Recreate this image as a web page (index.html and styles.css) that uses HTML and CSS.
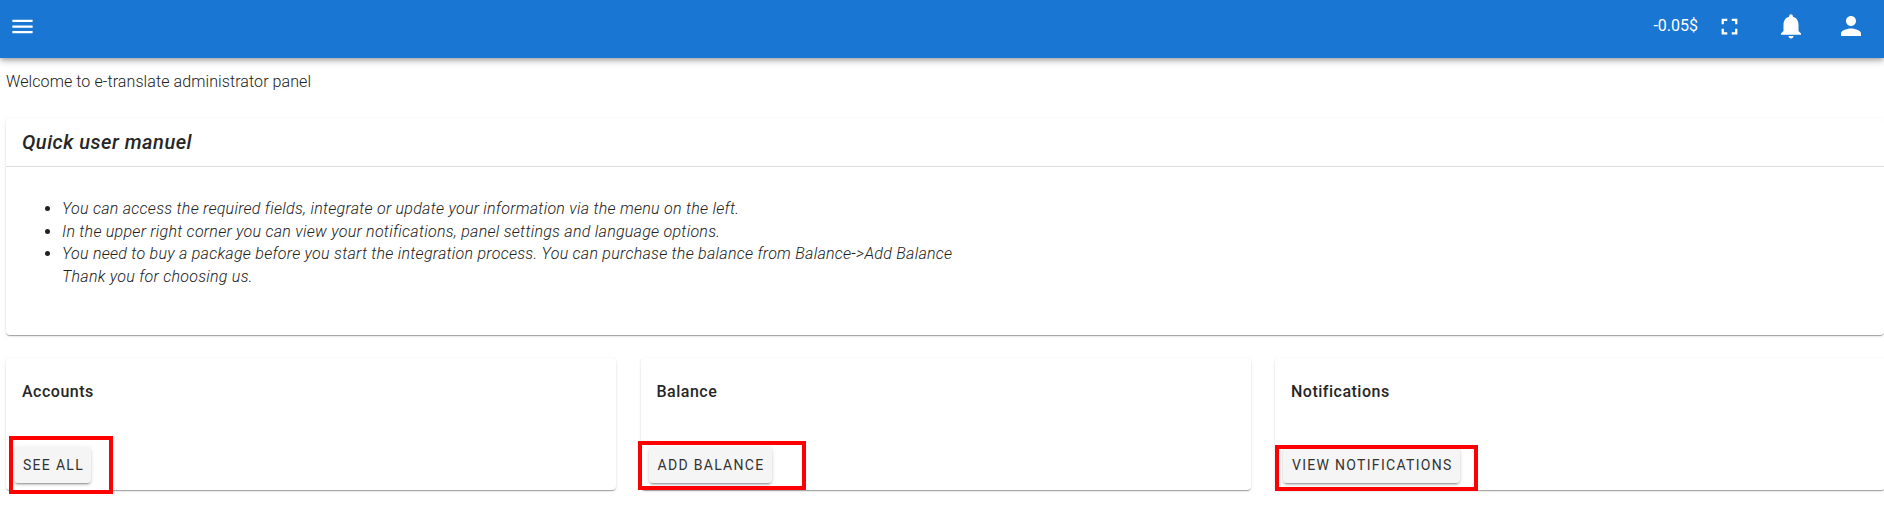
FILE: index.html
```html
<!DOCTYPE html>
<html lang="en">
<head>
    <meta charset="UTF-8">
    <title>e-translate</title>
    <link rel="stylesheet" href="styles.css">
</head>
<body>
    <header class="topbar">
        <svg class="ico ico-menu" viewBox="0 0 24 24"><path d="M3 18h18v-2H3v2zm0-5h18v-2H3v2zm0-7v2h18V6H3z"/></svg>
        <span class="balance">-0.05$</span>
        <svg class="ico ico-full" viewBox="0 0 24 24"><path d="M7 14H5v5h5v-2H7v-3zm-2-4h2V7h3V5H5v5zm12 7h-3v2h5v-5h-2v3zM14 5v2h3v3h2V5h-5z"/></svg>
        <svg class="ico ico-bell" viewBox="0 0 24 24"><path d="M12 22c1.1 0 2-.9 2-2h-4c0 1.1.89 2 2 2zm6-6v-5c0-3.07-1.64-5.64-4.5-6.32V4c0-.83-.67-1.5-1.5-1.5s-1.5.67-1.5 1.5v.68C7.63 5.36 6 7.92 6 11v5l-2 2v1h16v-1l-2-2z"/></svg>
        <svg class="ico ico-user" viewBox="0 0 24 24"><path d="M12 12c2.21 0 4-1.79 4-4s-1.79-4-4-4-4 1.79-4 4 1.79 4 4 4zm0 2c-2.67 0-8 1.34-8 4v2h16v-2c0-2.66-5.33-4-8-4z"/></svg>
    </header>

    <main class="page">
        <p class="welcome">Welcome to e-translate administrator panel</p>

        <section class="card manual">
            <h2 class="manual-title">Quick user manuel</h2>
            <div class="manual-body">
                <ul class="manual-list">
                    <li>You can access the required fields, integrate or update your information via the menu on the left.</li>
                    <li>In the upper right corner you can view your notifications, panel settings and language options.</li>
                    <li>You need to buy a package before you start the integration process. You can purchase the balance from Balance-&gt;Add Balance<br>Thank you for choosing us.</li>
                </ul>
            </div>
        </section>

        <div class="cards">
            <section class="card tile">
                <h3 class="tile-title">Accounts</h3>
                <div class="tile-actions">
                    <button class="btn">SEE ALL</button>
                    <span class="mark mark-accounts"></span>
                </div>
            </section>
            <section class="card tile">
                <h3 class="tile-title">Balance</h3>
                <div class="tile-actions">
                    <button class="btn">ADD BALANCE</button>
                    <span class="mark mark-balance"></span>
                </div>
            </section>
            <section class="card tile">
                <h3 class="tile-title">Notifications</h3>
                <div class="tile-actions">
                    <button class="btn">VIEW NOTIFICATIONS</button>
                    <span class="mark mark-notifications"></span>
                </div>
            </section>
        </div>
    </main>
</body>
</html>
```

FILE: styles.css
```css
html, body {
    height: 100%;
    margin: 0;
    padding: 0;
    background: #fff;
}
html {
    overflow: hidden;
}
body {
    font-family: Roboto, "Liberation Sans", sans-serif;
    color: #212121;
}

/* top bar */
.topbar {
    display: flex;
    align-items: center;
    height: 58px;
    background: #1976d2;
    color: #fff;
    box-shadow: 0 2px 4px -1px rgba(0,0,0,.2), 0 4px 5px 0 rgba(0,0,0,.14), 0 1px 10px 0 rgba(0,0,0,.12);
}
.ico {
    display: block;
    fill: #fff;
    flex: none;
    margin-top: -6px;
}
.ico-menu {
    width: 27px;
    height: 27px;
    margin-left: 9px;
    margin-right: auto;
}
.balance {
    font-size: 16px;
    font-weight: 400;
    line-height: 24px;
    margin-top: -6px;
}
.ico-full {
    width: 27px;
    height: 27px;
    margin-left: 18px;
}
.ico-bell {
    width: 30px;
    height: 30px;
    margin-left: 33px;
}
.ico-user {
    width: 30px;
    height: 30px;
    margin-left: 30px;
    margin-right: 18px;
}

/* content */
.page {
    padding: 0 6px;
}
.welcome {
    margin: 0;
    padding-top: 12px;
    font-size: 16px;
    font-weight: 300;
    line-height: 24px;
    letter-spacing: .09px;
    color: #212121;
}
.card {
    background: #fff;
    border-radius: 4px;
    box-shadow: 0 2px 1px -1px rgba(0,0,0,.2), 0 1px 1px 0 rgba(0,0,0,.14), 0 1px 3px 0 rgba(0,0,0,.12);
}
.manual {
    margin-top: 24px;
    margin-right: -6px;
    height: 217px;
    box-sizing: border-box;
}
.manual-title {
    margin: 0;
    padding: 0 16px;
    height: 48px;
    line-height: 48px;
    font-size: 20px;
    font-weight: 500;
    font-style: italic;
    letter-spacing: .5px;
    color: #262626;
    border-bottom: 1px solid #ddd;
}
.manual-body {
    padding: 31px 16px 0;
}
.manual-list {
    margin: 0;
    padding-left: 40px;
    font-size: 16px;
    font-weight: 300;
    font-style: italic;
    line-height: 22.5px;
    letter-spacing: .27px;
    color: #212121;
}

/* bottom cards */
.cards {
    display: grid;
    grid-template-columns: repeat(3, 610px);
    column-gap: 24.5px;
    margin-top: 23px;
    width: 1900px;
}
.tile {
    display: flex;
    flex-direction: column;
    justify-content: space-between;
    height: 132px;
    box-sizing: border-box;
    padding: 22px 8px 7px;
}
.tile-title {
    margin: 0;
    padding-left: 8px;
    font-size: 16px;
    font-weight: 500;
    line-height: 24px;
    letter-spacing: .5px;
    color: #262626;
}
.tile-actions {
    position: relative;
    display: flex;
}
.btn {
    height: 36px;
    padding: 0 7px 0 9px;
    border: 0;
    border-radius: 4px;
    background: #f5f5f5;
    color: #333;
    font-family: inherit;
    font-size: 14px;
    font-weight: 400;
    letter-spacing: 1.3px;
    box-shadow: 0 3px 1px -2px rgba(0,0,0,.2), 0 2px 2px 0 rgba(0,0,0,.14), 0 1px 5px 0 rgba(0,0,0,.12);
}

/* red highlight boxes drawn over the buttons */
.mark {
    position: absolute;
    border: 4px solid #f00;
    box-sizing: border-box;
}
.mark-accounts {
    left: -5px;
    top: -11px;
    width: 104px;
    height: 58px;
}
.mark-balance {
    left: -11px;
    top: -6px;
    width: 168px;
    height: 49px;
}
.mark-notifications {
    left: -8px;
    top: -2px;
    width: 203px;
    height: 46px;
}
```
